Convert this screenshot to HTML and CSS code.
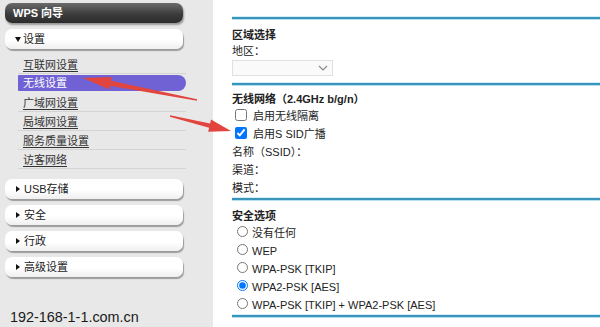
FILE: index.html
```html
<!DOCTYPE html>
<html lang="zh-CN">
<head>
<meta charset="utf-8">
<title>WPS 向导</title>
<link rel="stylesheet" href="styles.css">
</head>
<body>
<div class="page">
  <aside class="sidebar">
    <div class="wps-head">WPS 向导</div>
    <div class="menu-box open"><span class="tri-down"></span>设置</div>
    <ul class="submenu">
      <li><a>互联网设置</a></li>
      <li class="active"><a>无线设置</a></li>
      <li><a>广域网设置</a></li>
      <li><a>局域网设置</a></li>
      <li><a>服务质量设置</a></li>
      <li><a>访客网络</a></li>
    </ul>
    <div class="menu-group">
      <div class="menu-box"><span class="tri-right"></span>USB存储</div>
      <div class="menu-box"><span class="tri-right"></span>安全</div>
      <div class="menu-box"><span class="tri-right"></span>行政</div>
      <div class="menu-box"><span class="tri-right"></span>高级设置</div>
    </div>
    <div class="site">192-168-1-1.com.cn</div>
  </aside>
  <main class="content">
    <div class="rule"></div>
    <section class="sec sec-region">
      <div class="sec-title">区域选择</div>
      <div class="line">地区：</div>
      <div class="select">
        <svg class="chev" width="10" height="6" viewBox="0 0 10 6"><path d="M1 1 L5 5 L9 1" fill="none" stroke="#8a8a8a" stroke-width="1.2"/></svg>
      </div>
    </section>
    <div class="rule"></div>
    <section class="sec sec-wifi">
      <div class="sec-title">无线网络（2.4GHz b/g/n）</div>
      <label class="opt"><input type="checkbox" class="chk">启用无线隔离</label>
      <label class="opt"><input type="checkbox" class="chk" checked>启用S SID广播</label>
      <div class="line tall">名称（SSID）：</div>
      <div class="line tall">渠道：</div>
      <div class="line tall">模式：</div>
    </section>
    <div class="rule"></div>
    <section class="sec sec-sec">
      <div class="sec-title">安全选项</div>
      <label class="opt"><input type="radio" name="sec" class="rad">没有任何</label>
      <label class="opt"><input type="radio" name="sec" class="rad">WEP</label>
      <label class="opt"><input type="radio" name="sec" class="rad">WPA-PSK [TKIP]</label>
      <label class="opt"><input type="radio" name="sec" class="rad" checked>WPA2-PSK [AES]</label>
      <label class="opt"><input type="radio" name="sec" class="rad">WPA-PSK [TKIP] + WPA2-PSK [AES]</label>
    </section>
    <div class="rule"></div>
  </main>
  <svg class="arrows" width="600" height="327" viewBox="0 0 600 327">
    <polygon points="83,78 111.6,77 111,80.8 197.1,99.2 196.9,100.8 110,85.8 109.4,89.6" fill="#e2443e"/>
    <polygon points="231,131 211,119.6 210.1,123.6 170.1,115.3 169.9,116.7 209.1,127.8 208.2,131.8" fill="#e2443e"/>
  </svg>
</div>
</body>
</html>
```

FILE: styles.css
```css
* { box-sizing: border-box; }
html, body { margin: 0; padding: 0; }
body {
  width: 600px;
  height: 327px;
  overflow: hidden;
  font-family: "Liberation Sans", "Noto Sans CJK SC", sans-serif;
  font-size: 11px;
  color: #222;
  background: #fff;
}
.page {
  position: relative;
  display: flex;
  width: 600px;
  height: 327px;
}
.sidebar {
  width: 213px;
  flex: none;
  background: #e8e8e8;
  display: flex;
  flex-direction: column;
  padding: 3px 0 0 5px;
}
.wps-head {
  width: 178px;
  height: 20px;
  border-radius: 7px;
  background: linear-gradient(#6b6b6b, #3c3c3c 55%, #2c2c2c);
  box-shadow: 1px 2px 2px rgba(0,0,0,0.35);
  color: #fff;
  font-weight: bold;
  line-height: 20px;
  padding-left: 8px;
}
.menu-box {
  width: 178px;
  height: 20px;
  border-radius: 7px;
  background: linear-gradient(#fff, #fff 55%, #efefef);
  box-shadow: 1px 2px 1px #9c9c9c;
  line-height: 20px;
  padding-left: 10px;
  display: flex;
  align-items: center;
  color: #222;
}
.menu-box.open { margin-top: 6px; }
.tri-down {
  width: 0; height: 0;
  border-left: 3px solid transparent;
  border-right: 3px solid transparent;
  border-top: 5px solid #111;
  margin-right: 2px;
}
.tri-right {
  width: 0; height: 0;
  border-top: 3px solid transparent;
  border-bottom: 3px solid transparent;
  border-left: 4px solid #111;
  margin: 0 4px 0 1px;
}
.submenu {
  list-style: none;
  margin: 6px 0 0 13px;
  padding: 0;
  width: 168px;
}
.submenu li {
  height: 19px;
  border-bottom: 1px solid #d4d4d4;
  display: flex;
  align-items: center;
  padding-left: 5px;
}
.submenu li a {
  color: #333;
  text-decoration: underline;
  text-underline-offset: 2px;
}
.submenu li.active {
  border-bottom-color: transparent;
}
.submenu li.active a {
  display: block;
  width: 168px;
  height: 16px;
  line-height: 16px;
  margin-left: -5px;
  padding-left: 5px;
  background: #7062d4;
  color: #fff;
  text-decoration: none;
  border-radius: 1px 9px 9px 1px;
}
.menu-group {
  margin-top: 10px;
  display: flex;
  flex-direction: column;
  gap: 6px;
}
.site {
  margin-top: 31px;
  padding-left: 5px;
  font-size: 14.4px;
  line-height: 18px;
  color: #1a1a1a;
}
.content {
  flex: 1;
  padding: 17px 0 0 19px;
  display: flex;
  flex-direction: column;
}
.rule {
  height: 2px;
  background: #3a93ba;
  box-shadow: 0 1px 0 #b5e0ef, 0 -1px 0 #d2eef7;
  flex: none;
}
.sec { display: flex; flex-direction: column; }
.sec-title {
  font-weight: bold;
  line-height: 16px;
}
.line { line-height: 16px; }
.line.tall { line-height: 18px; height: 18px; }
.sec-region { padding-top: 8px; padding-bottom: 7px; }
.select {
  margin-top: 1px;
  width: 101px;
  height: 16px;
  border: 1px solid #e0e0e0;
  background: #fafafa;
  position: relative;
  display: flex;
  align-items: center;
  justify-content: flex-end;
  padding-right: 4px;
}
.sec-wifi { padding-top: 6px; padding-bottom: 1px; }
.opt {
  display: flex;
  align-items: center;
  height: 18px;
  line-height: 18px;
}
.chk {
  width: 12px;
  height: 12px;
  margin: -3px 6px 0 3px;
  align-self: center;
}
.sec-wifi .line.tall:first-of-type { margin-top: 1px; }
.sec-sec { padding-top: 8px; padding-bottom: 1px; }
.rad {
  width: 11px;
  height: 11px;
  margin: -4px 4px 0 5px;
}
.arrows {
  position: absolute;
  left: 0;
  top: 0;
  pointer-events: none;
}
```
